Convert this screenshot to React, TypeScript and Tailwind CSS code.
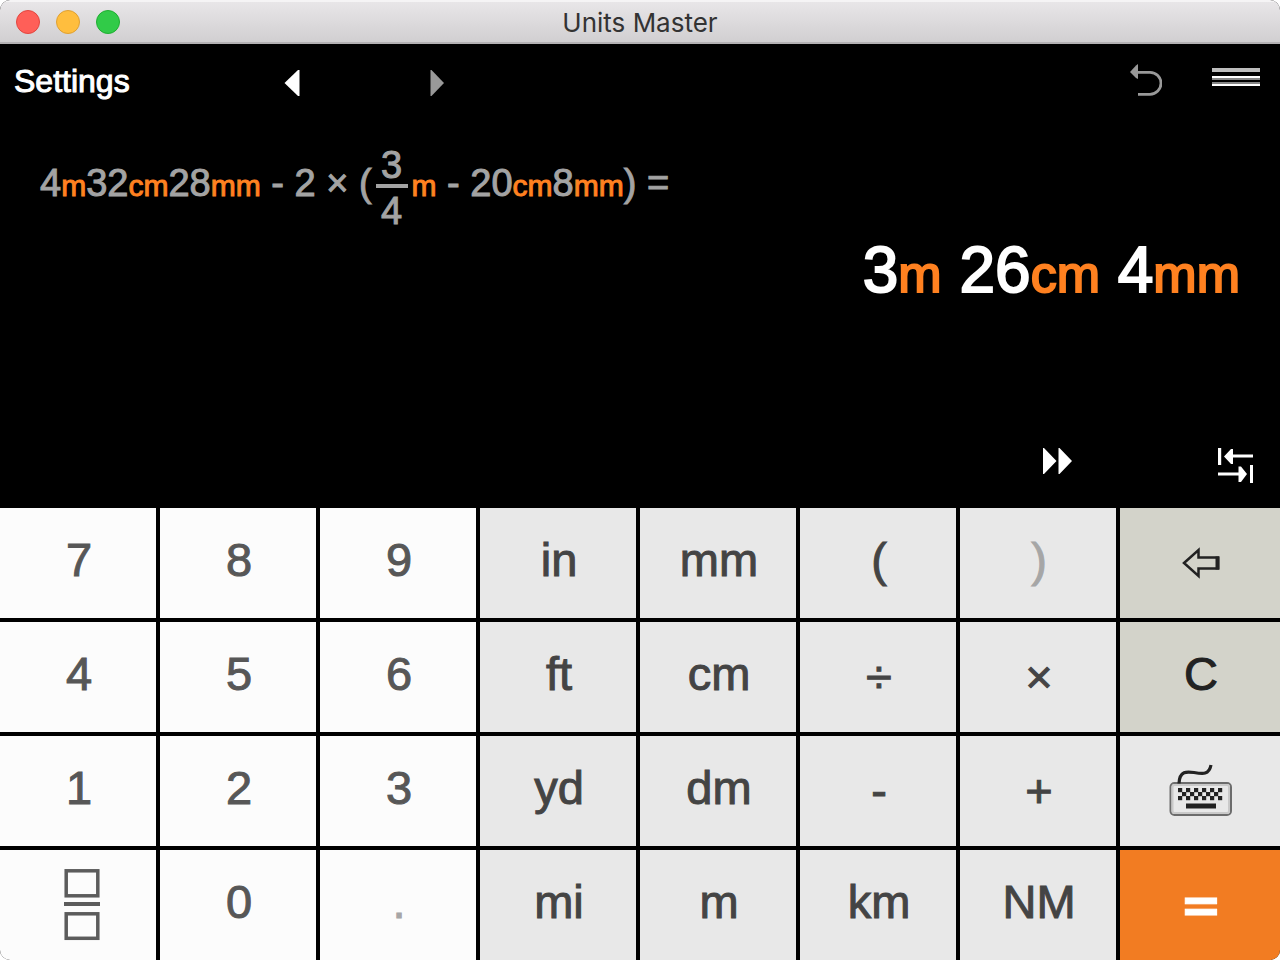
import type { ReactNode } from "react";

type Tone = "digit" | "unit" | "operator" | "edit" | "plain" | "equals";

interface Key {
  id: string;
  label: ReactNode;
  tone: Tone;
  name?: string;
  disabled?: boolean;
}

const toneClass: Record<Tone, string> = {
  digit: "bg-[#fcfcfc] pb-2 text-[#575757]",
  unit: "bg-[#e8e8e8] pb-2 text-[#444444]",
  operator: "bg-[#e8e8e8] pb-0.5 text-[#444444]",
  edit: "bg-[#d3d3ca] pb-2 text-[#222222]",
  plain: "bg-[#e8e8e8] pb-2 text-[#222222]",
  equals: "bg-[#f27c22] text-white",
};

function FractionIcon() {
  return (
    <svg width="36" height="72" viewBox="0 0 36 72" className="mt-2 ml-1.5" aria-hidden="true">
      <g fill="none" stroke="#5c5c5c" strokeWidth="3.5">
        <rect x="2.2" y="1.8" width="31.6" height="25" />
        <rect x="2.2" y="44.8" width="31.6" height="24.5" />
      </g>
      <rect x="0" y="33" width="36" height="4" fill="#5c5c5c" />
    </svg>
  );
}

function BackIcon() {
  return (
    <svg width="40" height="32" viewBox="0 0 40 32" className="mt-2" aria-hidden="true">
      <path d="M3 16 L17.5 3 V10.5 H37 V21.5 H17.5 V29 Z" fill="none" stroke="#222" strokeWidth="2.5" />
      <path d="M36.5 9.5 V22.5" stroke="#222" strokeWidth="4" />
    </svg>
  );
}

const KEY_DOTS = [
  ...[0, 1, 2, 3, 4, 5].map((i) => ({ x: 9 + i * 8, y: 24 })),
  ...[0, 1, 2, 3, 4].map((i) => ({ x: 13 + i * 8, y: 28 })),
  ...[0, 1, 2, 3, 4, 5].map((i) => ({ x: 9 + i * 8, y: 32 })),
];

function KeyboardIcon() {
  return (
    <svg width="64" height="54" viewBox="0 0 64 54" className="mt-2" aria-hidden="true">
      <rect x="1.5" y="19" width="60.5" height="32" rx="4" fill="none" stroke="#6c6c6c" strokeWidth="2" />
      <rect x="3.5" y="21" width="56.5" height="28" rx="2" fill="none" stroke="#c9c9c9" strokeWidth="2" />
      <path d="M10 19.500 C10.500 6.500 18 7.500 25 8.500 C34 10 40 11 42 1" fill="none" stroke="#222" strokeWidth="3.200" />
      {KEY_DOTS.map((dot) => (
        <rect key={`${dot.x}-${dot.y}`} x={dot.x} y={dot.y} width="4.200" height="4.200" fill="#222" />
      ))}
      <rect x="17" y="39.5" width="30" height="5" fill="#222" />
    </svg>
  );
}

const keys: Key[] = [
  { id: "7", label: "7", tone: "digit" },
  { id: "8", label: "8", tone: "digit" },
  { id: "9", label: "9", tone: "digit" },
  { id: "in", label: "in", tone: "unit" },
  { id: "mm", label: "mm", tone: "unit" },
  { id: "open", label: "(", tone: "unit" },
  { id: "close", label: ")", tone: "unit", disabled: true },
  { id: "back", label: <BackIcon />, tone: "edit", name: "Backspace" },
  { id: "4", label: "4", tone: "digit" },
  { id: "5", label: "5", tone: "digit" },
  { id: "6", label: "6", tone: "digit" },
  { id: "ft", label: "ft", tone: "unit" },
  { id: "cm", label: "cm", tone: "unit" },
  { id: "divide", label: "÷", tone: "operator" },
  { id: "times", label: "×", tone: "operator" },
  { id: "clear", label: "C", tone: "edit" },
  { id: "1", label: "1", tone: "digit" },
  { id: "2", label: "2", tone: "digit" },
  { id: "3", label: "3", tone: "digit" },
  { id: "yd", label: "yd", tone: "unit" },
  { id: "dm", label: "dm", tone: "unit" },
  { id: "minus", label: "-", tone: "operator" },
  { id: "plus", label: "+", tone: "operator" },
  { id: "keyboard", label: <KeyboardIcon />, tone: "plain", name: "Keyboard" },
  { id: "fraction", label: <FractionIcon />, tone: "digit", name: "Fraction" },
  { id: "0", label: "0", tone: "digit" },
  { id: "point", label: ".", tone: "digit", disabled: true },
  { id: "mi", label: "mi", tone: "unit" },
  { id: "m", label: "m", tone: "unit" },
  { id: "km", label: "km", tone: "unit" },
  { id: "nm", label: "NM", tone: "unit" },
  {
    id: "equals",
    label: <span className="font-['DejaVu_Sans',sans-serif] text-[50px] leading-none font-bold">=</span>,
    tone: "equals",
  },
];

function Unit({ children }: { children: ReactNode }) {
  return <span className="text-[30px] leading-none text-[#ff8120]">{children}</span>;
}

function ResultUnit({ children }: { children: ReactNode }) {
  return <span className="text-[52px] leading-none text-[#ff8120]">{children}</span>;
}

function TitleBar() {
  return (
    <header className="grid h-11 grid-cols-[1fr_auto_1fr] items-center border-t-2 border-b-2 border-t-[#f5f4f5] border-b-[#b4b2b4] bg-linear-to-b from-[#e8e6e8] to-[#d1cfd1] px-4">
      <div className="flex gap-4">
        <button type="button" aria-label="Close" className="size-6 rounded-full border border-[#e2463f] bg-[#ff5f58]" />
        <button type="button" aria-label="Minimize" className="size-6 rounded-full border border-[#dfa032] bg-[#ffbe3e]" />
        <button type="button" aria-label="Zoom" className="size-6 rounded-full border border-[#1fae31] bg-[#31cb48]" />
      </div>
      <h1 className="pt-0.5 font-[Inter,sans-serif] text-[26px] leading-8 text-[#333333]">Units Master</h1>
    </header>
  );
}

function Toolbar() {
  return (
    <nav className="flex h-[74px] items-center pr-5 pl-3.5">
      <button type="button" className="text-[32px] leading-8 [-webkit-text-stroke:1px]">Settings</button>
      <button type="button" aria-label="Previous" className="ml-[154px] pt-1">
        <svg width="16" height="28" viewBox="0 0 16 28" aria-hidden="true">
          <path d="M0.500 14 L14 1 H15.500 V27 H14 Z" fill="#fff" />
        </svg>
      </button>
      <button type="button" aria-label="Next" disabled className="ml-[130px] pt-1">
        <svg width="16" height="28" viewBox="0 0 16 28" aria-hidden="true">
          <path d="M0.500 1 H1.500 L14 14 L1.500 27 H0.500 Z" fill="#999" />
        </svg>
      </button>
      <button type="button" aria-label="Undo" className="ml-auto">
        <svg width="32" height="34" viewBox="0 0 32 34" aria-hidden="true">
          <path d="M0 8 L6 1.500 L8 0 V15 L6 14 Z" fill="#999" />
          <path d="M7 8.300 H20 A11 11 0 0 1 20 30.300 H8" fill="none" stroke="#999" strokeWidth="2.800" />
        </svg>
      </button>
      <button type="button" aria-label="Menu" className="ml-[50px] pb-2">
        <svg width="48" height="18" viewBox="0 0 48 18" aria-hidden="true">
          <rect y="0" width="48" height="4" fill="#bdbdbd" />
          <rect y="8" width="48" height="2" fill="#fff" />
          <rect y="10" width="48" height="2" fill="#858585" />
          <rect y="14" width="48" height="2" fill="#858585" />
          <rect y="16" width="48" height="2" fill="#fff" />
        </svg>
      </button>
    </nav>
  );
}

function Expression() {
  return (
    <div className="mt-7 flex items-center px-10 text-[38px] leading-[38px] whitespace-pre text-[#a3a3a3] [-webkit-text-stroke:1px]">
      <span className="pb-2.5">
        4<Unit>m</Unit>32<Unit>cm</Unit>28<Unit>mm</Unit> - 2 × (
      </span>
      <span className="mx-1 inline-flex flex-col items-stretch text-center">
        <span>3</span>
        <span className="mb-1 h-1 w-8 bg-[#a3a3a3]" />
        <span>4</span>
      </span>
      <span className="pb-2.5">
        <Unit>m</Unit> - 20<Unit>cm</Unit>8<Unit>mm</Unit>) =
      </span>
    </div>
  );
}

export default function App() {
  return (
    <div className="min-h-screen bg-white font-['Liberation_Sans',Arial,sans-serif]">
      <div className="flex min-h-screen flex-col overflow-hidden rounded-[10px] bg-black">
        <TitleBar />
        <main className="flex flex-1 flex-col">
          <section className="flex flex-1 flex-col text-white">
            <Toolbar />
            <Expression />
            <output className="mt-2 block px-10 text-right text-[64px] leading-[64px] [-webkit-text-stroke:2px]">
              3<ResultUnit>m</ResultUnit> 26<ResultUnit>cm</ResultUnit> 4<ResultUnit>mm</ResultUnit>
            </output>
            <div className="mt-auto flex items-start justify-end gap-[146px] pr-[26px] pb-6">
              <button type="button" aria-label="Fast forward">
                <svg width="30" height="27" viewBox="0 0 30 27" aria-hidden="true">
                  <path d="M1 0 H2 L14.500 13 L2 26 H1 Z M16.500 0 H17.500 L30 13 L17.500 26 H16.500 Z" fill="#fff" />
                </svg>
              </button>
              <button type="button" aria-label="Convert">
                <svg width="36" height="36" viewBox="0 0 36 36" aria-hidden="true">
                  <path d="M0 0 H3.200 V17 H0 Z M32 17 H35 V35 H32 Z" fill="#fff" />
                  <path d="M6 8.500 L13 1 H15 V6.500 H35 V9.500 H15 V16 H13 Z" fill="#fff" />
                  <path d="M29 26 L23 18.500 H20.500 V24.500 H0 V27.500 H20.500 V34 H23 Z" fill="#fff" />
                </svg>
              </button>
            </div>
          </section>
          <section aria-label="Keypad" className="grid auto-rows-[110px] grid-cols-8 gap-y-1">
            {keys.map((key) => (
              <button
                key={key.id}
                type="button"
                aria-label={key.name}
                disabled={key.disabled}
                className={`flex items-center justify-center border-black pl-0.5 text-[47px] leading-none [-webkit-text-stroke:1px] not-nth-[8n]:border-r-4 disabled:text-[#a6a6a6] ${toneClass[key.tone]}`}
              >
                {key.label}
              </button>
            ))}
          </section>
        </main>
      </div>
    </div>
  );
}
